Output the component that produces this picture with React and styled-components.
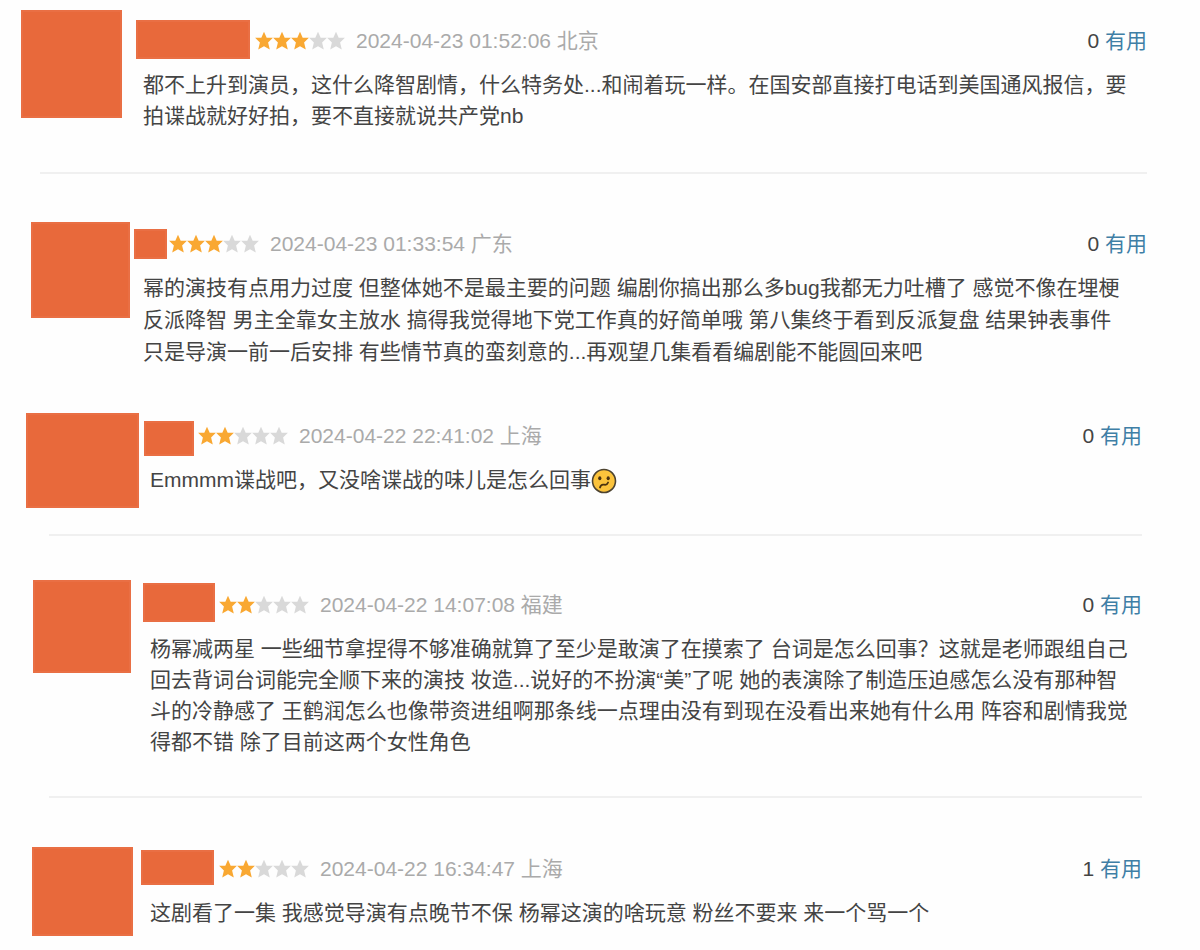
import styled, { createGlobalStyle } from "styled-components";

const reviews = [
  {
    id: 1,
    avatar: { w: 101, h: 108, left: 21, gap: 14 },
    name: { w: 114, h: 39, top: 1, gap: 5 },
    top: 10,
    headTop: 9,
    indent: 7,
    right: 53,
    leading: 31,
    stars: 3,
    time: "2024-04-23 01:52:06",
    place: "北京",
    votes: 0,
    text: "都不上升到演员，这什么降智剧情，什么特务处...和闹着玩一样。在国安部直接打电话到美国通风报信，要\n拍谍战就好好拍，要不直接就说共产党nb",
    line: { before: 41, left: 40 },
  },
  {
    id: 2,
    avatar: { w: 99, h: 96, left: 31, gap: 4 },
    name: { w: 33, h: 30, top: 7, gap: 2 },
    top: 48,
    headTop: 0,
    indent: 9,
    right: 53,
    leading: 32,
    stars: 3,
    time: "2024-04-23 01:33:54",
    place: "广东",
    votes: 0,
    text: "幂的演技有点用力过度 但整体她不是最主要的问题 编剧你搞出那么多bug我都无力吐槽了 感觉不像在埋梗\n反派降智 男主全靠女主放水 搞得我觉得地下党工作真的好简单哦 第八集终于看到反派复盘 结果钟表事件\n只是导演一前一后安排 有些情节真的蛮刻意的...再观望几集看看编剧能不能圆回来吧",
  },
  {
    id: 3,
    avatar: { w: 113, h: 95, left: 26, gap: 5 },
    name: { w: 50, h: 35, top: 7, gap: 4 },
    top: 45,
    headTop: 1,
    indent: 6,
    right: 58,
    leading: 32,
    stars: 2,
    time: "2024-04-22 22:41:02",
    place: "上海",
    votes: 0,
    text: "Emmmm谍战吧，又没啥谍战的味儿是怎么回事",
    emoji: true,
    line: { before: 26, left: 49 },
  },
  {
    id: 4,
    avatar: { w: 98, h: 93, left: 33, gap: 12 },
    name: { w: 72, h: 39, top: 0, gap: 4 },
    top: 44,
    headTop: 3,
    indent: 7,
    right: 58,
    leading: 31,
    stars: 2,
    time: "2024-04-22 14:07:08",
    place: "福建",
    votes: 0,
    text: "杨幂减两星 一些细节拿捏得不够准确就算了至少是敢演了在摸索了 台词是怎么回事？这就是老师跟组自己\n回去背词台词能完全顺下来的演技 妆造...说好的不扮演“美”了呢 她的表演除了制造压迫感怎么没有那种智\n斗的冷静感了 王鹤润怎么也像带资进组啊那条线一点理由没有到现在没看出来她有什么用 阵容和剧情我觉\n得都不错 除了目前这两个女性角色",
    line: { before: 39, left: 49 },
  },
  {
    id: 5,
    avatar: { w: 101, h: 89, left: 32, gap: 8 },
    name: { w: 73, h: 35, top: 3, gap: 5 },
    top: 49,
    headTop: 0,
    indent: 9,
    right: 58,
    leading: 31,
    stars: 2,
    time: "2024-04-22 16:34:47",
    place: "上海",
    votes: 1,
    text: "这剧看了一集 我感觉导演有点晚节不保 杨幂这演的啥玩意 粉丝不要来 来一个骂一个",
  },
];

const Stars = ({ value }) => (
  <StarRow viewBox="0 0 90 20" role="img" aria-label={`${value}星`}>
    {[0, 1, 2, 3, 4].map((i) => (
      <path
        key={i}
        transform={`translate(${i * 18} 0)`}
        fill={i < value ? "#f9a832" : "#d9d9d9"}
        d="M9 .8l2.7 6h6.200l-4.800 4.700 1.700 7L9 15.200 3.200 18.500l1.700-7L.1 6.800h6.200z"
      />
    ))}
  </StarRow>
);

const ConfusedFace = () => (
  <Face viewBox="0 0 26 26" role="img" aria-label="困惑">
    <circle cx="13" cy="13" r="11.5" fill="#fbc33c" stroke="#4d4330" strokeWidth="1.6" />
    <ellipse cx="8.8" cy="10.3" rx="1.6" ry="2" fill="#4a3210" />
    <ellipse cx="17.2" cy="10.3" rx="1.6" ry="2" fill="#4a3210" />
    <path
      d="M9 19.5c.8-3 2.600-3.200 4.200-2.800 1.700.4 3.100-.2 3.900-2.200"
      fill="none"
      stroke="#4a3210"
      strokeWidth="1.8"
      strokeLinecap="round"
    />
  </Face>
);

const Review = ({ item }) => (
  <>
    <Item $top={item.top} $left={item.avatar.left} $right={item.right}>
      <Avatar $w={item.avatar.w} $h={item.avatar.h} $gap={item.avatar.gap} />
      <Body $top={item.headTop}>
        <Head>
          <UserName $w={item.name.w} $h={item.name.h} $top={item.name.top} $gap={item.name.gap} />
          <Stars value={item.stars} />
          <Meta>
            <time>{item.time}</time> {item.place}
          </Meta>
          <Vote>
            {item.votes} <a href="#useful">有用</a>
          </Vote>
        </Head>
        <Comment $indent={item.indent} $leading={item.leading}>
          {item.text}
          {item.emoji && <ConfusedFace />}
        </Comment>
      </Body>
    </Item>
    {item.line && <Line $before={item.line.before} $left={item.line.left} $right={item.right} />}
  </>
);

const App = () => {
  return (
    <Page>
      <GlobalStyle />
      {reviews.map((item) => (
        <Review key={item.id} item={item} />
      ))}
    </Page>
  );
};

const GlobalStyle = createGlobalStyle`
  * {
    box-sizing: border-box;
  }
  body {
    margin: 0;
    background: #fefefe;
    color: #444;
    font-family: "Liberation Sans", "Noto Sans CJK SC", sans-serif;
    font-size: 21px;
  }
`;

const Page = styled.main`
  display: flow-root;
`;

const Item = styled.article`
  display: flex;
  align-items: flex-start;
  margin-top: ${(p) => p.$top}px;
  padding-left: ${(p) => p.$left}px;
  padding-right: ${(p) => p.$right}px;
`;

const Block = styled.div`
  flex-shrink: 0;
  width: ${(p) => p.$w}px;
  height: ${(p) => p.$h}px;
  margin-right: ${(p) => p.$gap}px;
  background: #e8693b;
  border: 2px solid #e96f44;
`;

const Avatar = styled(Block)``;

const UserName = styled(Block)`
  align-self: flex-start;
  margin-top: ${(p) => p.$top}px;
`;

const Body = styled.div`
  flex: 1;
  min-width: 0;
  margin-top: ${(p) => p.$top}px;
`;

const Head = styled.header`
  display: flex;
  align-items: center;
  height: 44px;
  line-height: 40px;
  white-space: nowrap;
`;

const StarRow = styled.svg`
  flex-shrink: 0;
  width: 90px;
  height: 20px;
`;

const Meta = styled.span`
  margin-left: 11px;
  color: #aaa;
`;

const Vote = styled.span`
  margin-left: auto;
  a {
    color: #3f7fa6;
    text-decoration: none;
  }
`;

const Comment = styled.p`
  margin: 6px 0 0;
  padding-left: ${(p) => p.$indent}px;
  line-height: ${(p) => p.$leading}px;
  white-space: pre-line;
`;

const Face = styled.svg`
  width: 26px;
  height: 26px;
  vertical-align: middle;
`;

const Line = styled.hr`
  height: 2px;
  margin: ${(p) => p.$before}px ${(p) => p.$right}px 0 ${(p) => p.$left}px;
  border: 0;
  background: #f0f0f0;
`;

export default App;
